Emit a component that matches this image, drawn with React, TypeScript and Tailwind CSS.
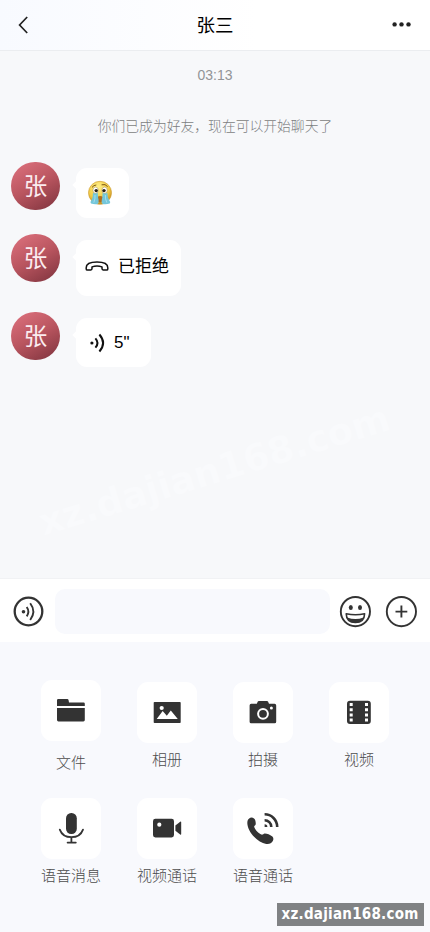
import type { ReactNode } from 'react'
import { clsx } from 'clsx'

interface Message {
  id: number
  rowClass: string
  bubbleClass: string
  content: ReactNode
}

interface Action {
  label: string
  icon: ReactNode
  raised?: boolean
}

function CryingFace() {
  return (
    <svg width="26" height="26" viewBox="0 0 26 26">
      <defs>
        <radialGradient id="face" cx="0.42" cy="0.25" r="0.8">
          <stop offset="0" stopColor="#fff08a" />
          <stop offset="0.6" stopColor="#f2cb45" />
          <stop offset="1" stopColor="#c0841c" />
        </radialGradient>
      </defs>
      <circle cx="13" cy="12.8" r="11.5" fill="url(#face)" stroke="#c99528" strokeWidth="0.6" />
      <path d="M5 7.4Q6.8 5 9.3 5M14.6 4.8Q18.4 3.6 20.6 6.6" fill="none" stroke="#7a5510" strokeWidth="1" />
      <ellipse cx="8.6" cy="10.2" rx="2.7" ry="3.1" fill="#fff" stroke="#8b6a20" strokeWidth="0.4" />
      <ellipse cx="17.6" cy="10.2" rx="2.7" ry="3.1" fill="#fff" stroke="#8b6a20" strokeWidth="0.4" />
      <circle cx="9.2" cy="10.6" r="1.7" fill="#2a2115" />
      <circle cx="17" cy="10.6" r="1.7" fill="#2a2115" />
      <path d="M10.2 17.2Q13.2 14.6 16.2 17.2L15.8 21.6Q13.2 23.2 10.6 21.6Z" fill="#b06d1c" />
      <path d="M6 12.8Q8.5 14.2 10.8 12.8Q10.8 17 11.6 20Q12 23.4 10.6 24Q8 24.8 4 23.6Q2.6 22 4.4 20.4Q6.2 17 6 12.8Z" fill="#74c6da" />
      <path d="M15.6 12.8Q18 14.2 20.4 12.8Q20.2 17 22.2 20.2Q24 22 22.8 23.6Q18.6 24.8 15.8 24Q14.2 23.4 14.8 20Q15.6 17 15.6 12.8Z" fill="#74c6da" />
      <path d="M8 15Q8.4 19 6.8 22.6M18.4 15Q18 19 19.8 22.6" fill="none" stroke="#a9e0ec" strokeWidth="0.9" />
    </svg>
  )
}

function HangUpIcon() {
  return (
    <svg width="24" height="12" viewBox="0 0 24 12" fill="none" stroke="#111" strokeWidth="1.5" strokeLinejoin="round">
      <path d="M1.2 6.8C1.2 2.8 6.5 1.1 12 1.1S22.8 2.8 22.8 6.8V7.9Q22.8 9.1 21.6 9.1L18.2 8.9Q17 8.8 17 7.6V5.9Q12 4.3 7 5.9V7.6Q7 8.8 5.8 8.9L2.4 9.1Q1.2 9.1 1.2 7.9Z" />
    </svg>
  )
}

function VoiceIcon() {
  return (
    <svg width="16" height="20" viewBox="0 0 16 20" fill="none" stroke="#111" strokeWidth="2">
      <circle cx="1.9" cy="10" r="1.6" fill="#111" stroke="none" />
      <path d="M5.4 5.4Q9.6 10 5.4 14.6" />
      <path d="M9.4 1.5Q16.8 10 9.4 18.5" />
    </svg>
  )
}

const messages: Message[] = [
  { id: 1, rowClass: 'h-[72px]', bubbleClass: 'h-[50px] w-[53px] justify-center pr-[5px]', content: <CryingFace /> },
  {
    id: 2,
    rowClass: 'h-[78px]',
    bubbleClass: 'h-14 w-[105px] gap-[9px] pb-[3px] pl-[9px]',
    content: (
      <>
        <HangUpIcon />
        <span>已拒绝</span>
      </>
    ),
  },
  {
    id: 3,
    rowClass: 'h-[60px]',
    bubbleClass: 'h-[49px] w-[75px] gap-2 pl-[14px]',
    content: (
      <>
        <VoiceIcon />
        <span>5"</span>
      </>
    ),
  },
]

const actions: Action[] = [
  {
    label: '文件',
    raised: true,
    icon: (
      <>
        <path d="M16 26V20.2Q16 19 17.2 19H26.2Q27.4 19 27.6 20.2L28 22.5H42.6Q43.8 22.5 43.8 23.7V26Z" />
        <path d="M16 28H43.8V40Q43.8 41.4 42.4 41.4H17.4Q16 41.4 16 40Z" />
      </>
    ),
  },
  {
    label: '相册',
    icon: (
      <>
        <rect x="16.7" y="20" width="27" height="21" rx="0.8" />
        <circle cx="24.7" cy="26" r="2.1" fill="#fff" />
        <path d="M19.7 37L25.7 28.9L29.8 33.7L33.8 28.4L40.8 37Z" fill="#fff" />
      </>
    ),
  },
  {
    label: '拍摄',
    icon: (
      <>
        <path d="M18.2 21.8H23.8L24.8 19.6Q25.1 19 25.8 19H34Q34.7 19 35 19.6L36 21.8H41.6Q43.2 21.8 43.2 23.4V39.7Q43.2 41.3 41.6 41.3H18.2Q16.6 41.3 16.6 39.7V23.4Q16.6 21.8 18.2 21.8Z" />
        <circle cx="30" cy="31.8" r="4.9" fill="none" stroke="#fff" strokeWidth="2" />
        <circle cx="38.4" cy="26" r="1.5" fill="#fff" />
      </>
    ),
  },
  {
    label: '视频',
    icon: (
      <>
        <rect x="18" y="18.8" width="23.8" height="23.2" rx="3" />
        <path
          d="M20.7 21h3v3h-3zM20.7 26.2h3v3h-3zM20.7 31.4h3v3h-3zM20.7 36.6h3v3h-3zM36 21h3v3h-3zM36 26.2h3v3h-3zM36 31.4h3v3h-3zM36 36.6h3v3h-3z"
          fill="#fff"
        />
      </>
    ),
  },
  {
    label: '语音消息',
    icon: (
      <>
        <rect x="25" y="15" width="10.8" height="21" rx="5.2" />
        <path
          d="M18.8 31.6Q21.6 39.2 30.4 39.2T42 31.6M30.4 39.2V44.6M26.6 44.6H34.8"
          fill="none"
          stroke="#333"
          strokeWidth="1.8"
          strokeLinecap="round"
        />
      </>
    ),
  },
  {
    label: '视频通话',
    icon: (
      <>
        <rect x="16" y="20.8" width="21" height="18.6" rx="2.4" />
        <circle cx="22.3" cy="26.7" r="2.1" fill="#fff" />
        <path d="M38.4 27.6L43.2 23.8Q44.2 23.2 44.2 24.4V36Q44.2 37.2 43.2 36.6L38.4 32.8Z" />
      </>
    ),
  },
  {
    label: '语音通话',
    icon: (
      <>
        <path d="M16.2 20.5C17.4 19.4 19.4 19.3 21 20.4C22.4 21.4 22.9 24 22.7 26.2C22.6 27.4 20.9 27.7 21.2 29C22.3 32 25.6 35.4 28.4 36.6C29.7 37.1 30.5 35.6 31.6 35.5C34 35.4 37 36.8 39 38.2C40.6 39.4 40.7 41.4 39.8 43C38.6 45.4 36 46.4 33.2 45.9C24.6 44.2 15.6 35 14.4 26.2C14.1 23.6 14.6 21.6 16.2 20.5Z" />
        <path
          d="M31.6 16.3A12.6 12.6 0 0 1 44.2 28.9M31.6 22.2A6.7 6.7 0 0 1 38.3 28.9"
          fill="none"
          stroke="#333"
          strokeWidth="2.6"
        />
        <path d="M31.6 26.2A2.8 2.8 0 0 1 34.4 29H31.6Z" />
      </>
    ),
  },
]

function Avatar() {
  return (
    <div className="flex h-12 w-[49px] shrink-0 items-center justify-center rounded-full bg-linear-150 from-[#d86d79] from-10% via-[#b9555f] to-[#833640] to-95% pt-[4px] text-[23.5px] text-[#fbecef]">
      张
    </div>
  )
}

export default function App() {
  return (
    <main className="relative flex h-[932px] w-[430px] flex-col overflow-hidden bg-[#f7f8fa] font-['Liberation_Sans','Noto_Sans_CJK_SC',sans-serif] text-black">
      {/* Header */}
      <header className="flex h-[51px] shrink-0 items-center justify-between border-b border-[#ebedf0] bg-linear-to-r from-[#f8faff] to-white to-60% px-[18px]">
        <svg width="20" height="20" viewBox="0 0 20 20" fill="none" stroke="#222" strokeWidth="1.7">
          <path d="M9.2 2L1.6 10L9.2 18" />
        </svg>
        <h1 className="pt-px text-[18.5px] leading-6">张三</h1>
        <svg width="20" height="6" viewBox="0 0 20 6" fill="#222">
          <circle cx="2.6" cy="2.4" r="2.2" />
          <circle cx="9.5" cy="2.4" r="2.2" />
          <circle cx="16.5" cy="2.4" r="2.2" />
        </svg>
      </header>

      {/* Conversation */}
      <section className="relative flex-1 overflow-hidden">
        <p className="mt-[14px] text-center text-[14px] leading-5 text-[#929497]">03:13</p>
        <p className="mt-8 text-center text-[13.8px] leading-5 font-light text-[#7c7e81]">
          你们已成为好友，现在可以开始聊天了
        </p>
        <div className="mt-[25px] pl-[11px]">
          {messages.map((msg) => (
            <div key={msg.id} className={clsx('flex items-start gap-4', msg.rowClass)}>
              <Avatar />
              <div
                className={clsx(
                  'relative mt-1.5 flex items-center rounded-[11px] bg-white text-[17px] before:absolute before:top-[13px] before:-left-[2px] before:h-2 before:w-2 before:rotate-45 before:bg-white',
                  msg.bubbleClass
                )}
              >
                {msg.content}
              </div>
            </div>
          ))}
        </div>
        <span className="absolute top-[396px] left-[32px] -rotate-[17deg] font-['DejaVu_Sans'] text-[37px] leading-[48px] font-bold whitespace-nowrap text-[#f9fafc]">
          xz.dajian168.com
        </span>
      </section>

      {/* Input bar */}
      <div className="flex h-[64px] shrink-0 items-center border-t border-[#f1f2f4] bg-white px-3 pt-px">
        <svg width="33" height="33" viewBox="0 0 33 33" fill="none" stroke="#333">
          <circle cx="16.5" cy="16.5" r="13.8" strokeWidth="2.3" />
          <circle cx="11.5" cy="16.7" r="1.8" fill="#333" stroke="none" />
          <path d="M14.7 12Q18 16.6 14.7 21.4" strokeWidth="1.9" />
          <path d="M18.2 8.3Q24.5 16.6 18.2 25" strokeWidth="1.9" />
        </svg>
        <div className="ml-[10px] h-[45px] w-[275px] rounded-[10px] bg-[#f8f9fd]" />
        <svg className="ml-[9px]" width="33" height="33" viewBox="0 0 33 33" fill="none" stroke="#333">
          <circle cx="16.4" cy="16.6" r="14.6" strokeWidth="1.9" />
          <ellipse cx="11.8" cy="12.6" rx="2" ry="2.5" fill="#333" stroke="none" />
          <ellipse cx="21" cy="12.6" rx="2" ry="2.5" fill="#333" stroke="none" />
          <path d="M7.2 18.7Q16.4 20.7 25.6 18.7Q25.4 27.4 16.4 27.4T7.2 18.7Z" strokeWidth="1.6" strokeLinejoin="round" />
          <path d="M8.2 22.4Q16.4 25.4 24.6 22.4Q22 27.8 16.4 27.8T8.2 22.4Z" fill="#333" stroke="none" />
        </svg>
        <svg className="ml-[13px]" width="33" height="33" viewBox="0 0 33 33" fill="none" stroke="#333">
          <circle cx="16.4" cy="16.6" r="14.6" strokeWidth="1.9" />
          <path d="M10.5 16.6H22.3M16.4 10.6V22.6" strokeWidth="1.9" />
        </svg>
      </div>

      {/* Action panel */}
      <div className="grid h-[290px] shrink-0 grid-cols-[repeat(4,96px)] grid-rows-[116px_116px] bg-[#f8f9fd] pt-10 pl-[23px]">
        {actions.map((action) => (
          <button key={action.label} className={clsx('flex flex-col items-center', action.raised && '-mt-0.5')}>
            <span className="flex h-[61px] w-[60px] rounded-[11px] bg-white">
              <svg width="60" height="61" viewBox="0 0 60 61" fill="#333">
                {action.icon}
              </svg>
            </span>
            <span
              className={clsx('text-[15px] leading-5 font-light text-[#4c4c4c]', action.raised ? 'mt-3' : 'mt-[7px]')}
            >
              {action.label}
            </span>
          </button>
        ))}
      </div>

      <div className="absolute right-[6px] bottom-[6px] flex h-[23px] w-[147px] items-center bg-[#808284] pl-[4.5px] font-['DejaVu_Sans_Condensed','DejaVu_Sans'] text-[15px] font-bold tracking-[0.25px] text-white">
        xz.dajian168.com
      </div>
    </main>
  )
}
